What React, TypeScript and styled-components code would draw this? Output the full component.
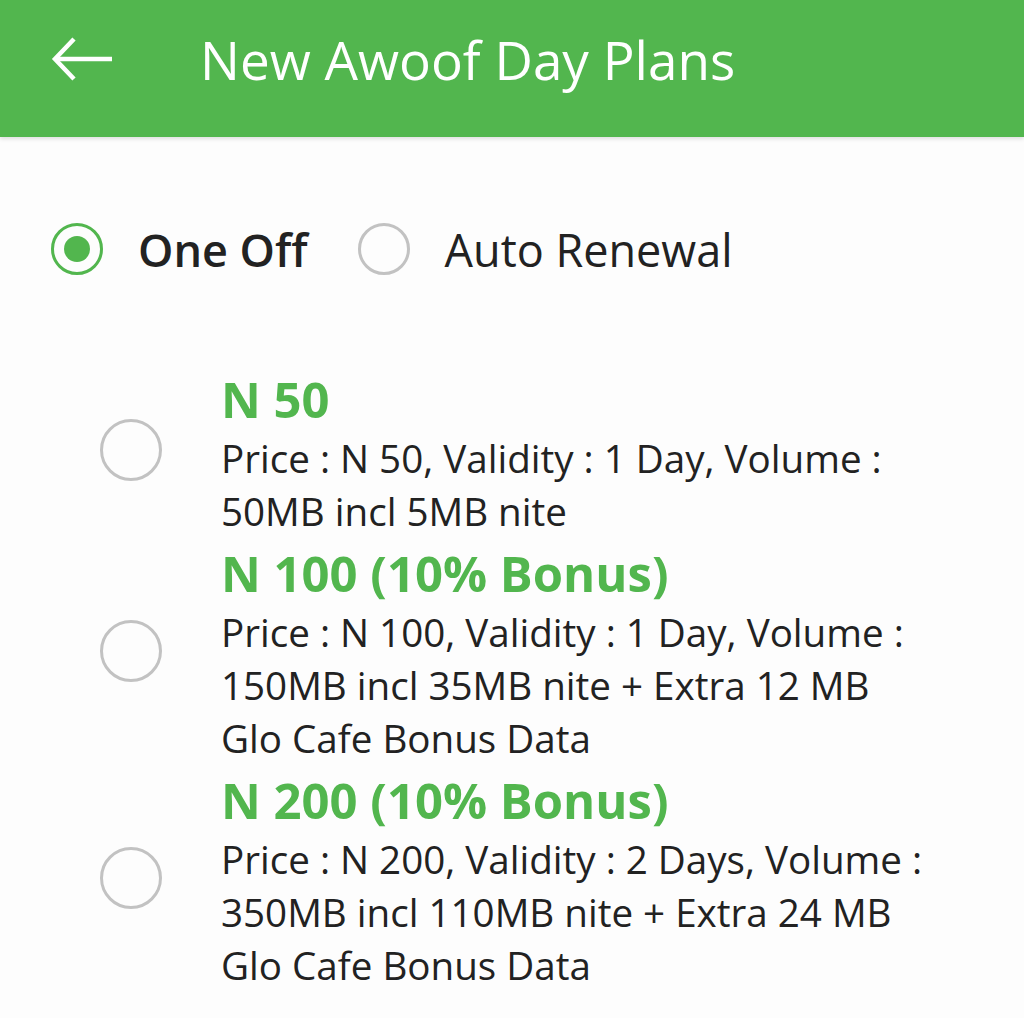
import React from "react";
import styled, { createGlobalStyle } from "styled-components";

const Global = createGlobalStyle`
  html, body { margin: 0; padding: 0; background: #fdfdfd; }
  body { font-family: "Open Sans", "Noto Sans", sans-serif; color: #222; }
`;

const Page = styled.div`
  width: 1024px;
  min-height: 1018px;
  background: #fdfdfd;
  overflow: hidden;
`;

const Header = styled.header`
  height: 137px;
  background: #52b64e;
  display: flex;
  align-items: center;
  padding: 0 0 18px 50px;
  box-sizing: border-box;
  box-shadow: 0 2px 4px rgba(0, 0, 0, 0.12);
  gap: 86px;
`;

const Title = styled.h1`
  margin: 0;
  font-size: 53px;
  font-weight: 400;
  color: #fff;
  line-height: 1;
`;

const ModeRow = styled.div`
  display: flex;
  align-items: center;
  padding: 86px 0 0 51px;
  height: 52px;
`;

const ModeOption = styled.label<{ $gap: number }>`
  display: flex;
  align-items: center;
  gap: 35px;
  margin-right: ${(p) => p.$gap}px;
`;

const ModeText = styled.span<{ $bold?: boolean }>`
  font-size: 45px;
  font-weight: ${(p) => (p.$bold ? 600 : 400)};
  color: #222;
`;

const Radio = styled.span<{ $size: number; $checked?: boolean }>`
  box-sizing: border-box;
  width: ${(p) => p.$size}px;
  height: ${(p) => p.$size}px;
  border-radius: 50%;
  border: 3px solid ${(p) => (p.$checked ? "#52b64e" : "#c2c2c2")};
  display: flex;
  align-items: center;
  justify-content: center;
  flex: none;
  &::after {
    content: "";
    display: ${(p) => (p.$checked ? "block" : "none")};
    width: ${(p) => p.$size * 0.5}px;
    height: ${(p) => p.$size * 0.5}px;
    border-radius: 50%;
    background: #52b64e;
  }
`;

const PlanList = styled.div`
  display: flex;
  flex-direction: column;
  padding: 92px 0 0 100px;
  gap: 8px;
`;

const Plan = styled.div`
  display: flex;
  align-items: center;
  gap: 59px;
`;

const PlanBody = styled.div`
  display: flex;
  flex-direction: column;
  transform: translateY(5px);
`;

const PlanTitle = styled.div`
  font-size: 49px;
  font-weight: 700;
  color: #52b64e;
  line-height: 54px;
  margin-bottom: 6px;
  white-space: nowrap;
`;

const PlanDesc = styled.div`
  font-size: 38.6px;
  line-height: 53px;
  color: #222;
  white-space: nowrap;
`;

const plans = [
  {
    title: "N 50",
    desc: ["Price : N 50, Validity : 1 Day, Volume :", "50MB incl 5MB nite"],
  },
  {
    title: "N 100 (10% Bonus)",
    desc: [
      "Price : N 100, Validity : 1 Day, Volume :",
      "150MB incl 35MB nite + Extra 12 MB",
      "Glo Cafe Bonus Data",
    ],
  },
  {
    title: "N 200 (10% Bonus)",
    desc: [
      "Price : N 200, Validity : 2 Days, Volume :",
      "350MB incl 110MB nite + Extra 24 MB",
      "Glo Cafe Bonus Data",
    ],
  },
];

export default function App() {
  return (
    <Page>
      <Global />
      <Header>
        <svg width="64" height="48" viewBox="0 0 64 48" fill="none">
          <path d="M62 23H5" stroke="#fff" strokeWidth="4.5" />
          <path d="M24 3L5 23L24 43" stroke="#fff" strokeWidth="4.5" />
        </svg>
        <Title>New Awoof Day Plans</Title>
      </Header>
      <ModeRow>
        <ModeOption $gap={50}>
          <Radio $size={52} $checked />
          <ModeText $bold>One Off</ModeText>
        </ModeOption>
        <ModeOption $gap={0}>
          <Radio $size={52} />
          <ModeText>Auto Renewal</ModeText>
        </ModeOption>
      </ModeRow>
      <PlanList>
        {plans.map((p) => (
          <Plan key={p.title}>
            <Radio $size={62} />
            <PlanBody>
              <PlanTitle>{p.title}</PlanTitle>
              {p.desc.map((d) => (
                <PlanDesc key={d}>{d}</PlanDesc>
              ))}
            </PlanBody>
          </Plan>
        ))}
      </PlanList>
    </Page>
  );
}
